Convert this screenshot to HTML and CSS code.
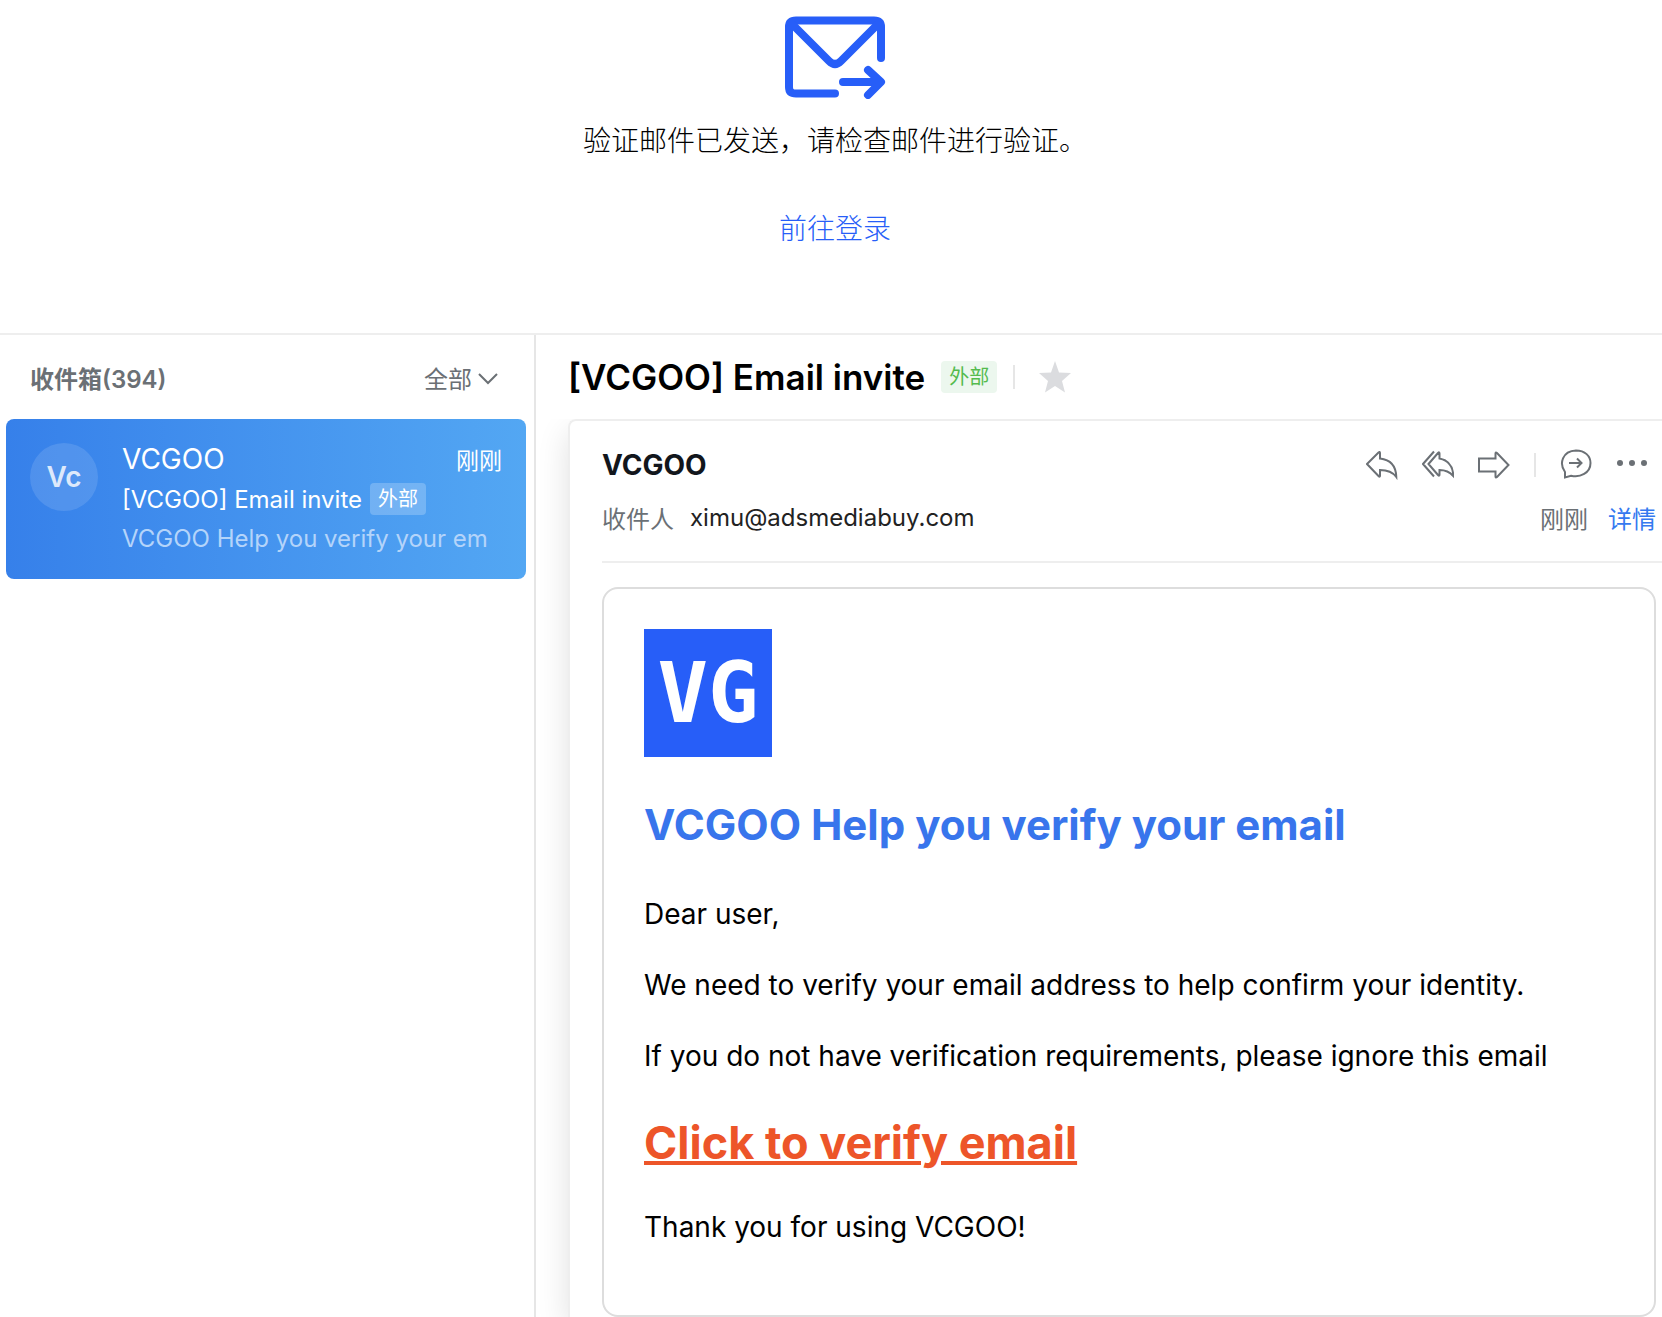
FILE: index.html
```html
<!DOCTYPE html>
<html lang="zh-CN">
    <head>
        <meta charset="UTF-8">
        <title>VCGOO</title>
        <link rel="stylesheet" href="styles.css">
    </head>
    <body>
        <header class="notice">
            <svg class="notice-icon" viewBox="0 0 101 83" fill="none" stroke="currentColor" stroke-width="8" stroke-linecap="round" stroke-linejoin="round">
                <path d="M96 42V11Q96 4.500 89 4.500H11Q4 4.500 4 11V71Q4 77.500 11 77.500H50" />
                <path d="M7 8L44 45Q50 51 56 45L93 8" />
                <path d="M58 66H94M83 54L96 66L83 79" />
            </svg>
            <p class="notice-text">验证邮件已发送，请检查邮件进行验证。</p>
            <a class="notice-link" href="#">前往登录</a>
        </header>

        <div class="mail">
            <aside class="sidebar">
                <div class="sidebar-head">
                    <h2 class="folder">收件箱(394)</h2>
                    <button class="filter" type="button">全部
                        <svg width="20" height="12" viewBox="0 0 20 12" fill="none" stroke="currentColor" stroke-width="2"><path d="M1 1L10 10L19 1" /></svg>
                    </button>
                </div>
                <a class="item" href="#">
                    <span class="avatar">Vc</span>
                    <span class="item-body">
                        <span class="item-row">
                            <span class="item-from">VCGOO</span>
                            <span class="item-time">刚刚</span>
                        </span>
                        <span class="item-subject">[VCGOO] Email invite <span class="tag tag-light">外部</span></span>
                        <span class="item-preview">VCGOO Help you verify your em</span>
                    </span>
                </a>
            </aside>

            <main class="reader">
                <div class="reader-head">
                    <h1 class="subject">[VCGOO] Email invite</h1>
                    <span class="tag tag-green">外部</span>
                    <span class="divider"></span>
                    <button class="icon-btn star" type="button" aria-label="星标">
                        <svg viewBox="0 0 32 32" fill="currentColor"><path d="M16 0L20 11.500L32 12L23 20L26 31.500L16 25L6 31.500L9 20L0 12L12 11.500Z" /></svg>
                    </button>
                </div>
                <div class="card-wrap">
                    <article class="card">
                        <div class="card-head">
                            <div class="row">
                                <strong class="sender">VCGOO</strong>
                                <div class="actions">
                                    <button class="icon-btn" type="button" aria-label="回复">
                                        <svg viewBox="0 0 32 32"><path d="M1 15L12.500 3.500Q14 2.300 14 4V9.500C23 10.500 30 16 30.300 28C26 22 20 21 14 21V26.500Q14 28.500 12.500 27Z" /></svg>
                                    </button>
                                    <button class="icon-btn" type="button" aria-label="回复全部">
                                        <svg viewBox="0 0 32 32"><path d="M12 2.500L1 15L12 27.500M6.500 15L16 4Q17.500 2.500 17.500 4.500V9.500C25 11 31 16 31.300 27C27 22 23 21 17.500 21V25.500Q17.500 27.500 16 26Z" /></svg>
                                    </button>
                                    <button class="icon-btn" type="button" aria-label="转发">
                                        <svg viewBox="0 0 32 32"><path d="M1 9.500H17.500V4.500Q17.500 2.800 19 4L30.500 16L19 28Q17.500 29.200 17.500 27.500V22.500H1Z" /></svg>
                                    </button>
                                    <span class="divider"></span>
                                    <button class="icon-btn" type="button" aria-label="分享到会话">
                                        <svg viewBox="0 0 32 32"><path d="M5 28.500V23C-1 15 2 2 16 1.500C25 1.500 30.500 7 30.500 14C30.500 24 20 29 11 26.700ZM9 14H21.500M17 9.500L21.500 14L17 18.500" /></svg>
                                    </button>
                                    <button class="icon-btn" type="button" aria-label="更多">
                                        <svg class="dots" viewBox="0 0 32 32"><circle cx="4" cy="14" r="3" /><circle cx="16" cy="14" r="3" /><circle cx="28" cy="14" r="3" /></svg>
                                    </button>
                                </div>
                            </div>
                            <div class="row meta">
                                <span class="to">收件人</span>
                                <span class="address">ximu@adsmediabuy.com</span>
                                <span class="time">刚刚</span>
                                <a class="detail" href="#">详情</a>
                            </div>
                        </div>
                        <section class="message">
                            <div class="logo">VG</div>
                            <h2 class="message-title">VCGOO Help you verify your email</h2>
                            <p>Dear user,</p>
                            <p>We need to verify your email address to help confirm your identity.</p>
                            <p>If you do not have verification requirements, please ignore this email</p>
                            <a class="verify" href="#">Click to verify email</a>
                            <p>Thank you for using VCGOO!</p>
                        </section>
                    </article>
                </div>
            </main>
        </div>
    </body>
</html>
```
FILE: styles.css
```css
* {
    box-sizing: border-box;
}
html, body {
    margin: 0px;
    background: #fff;
    color: #000;
    font-family: Inter, "Noto Sans CJK SC", sans-serif;
    font-size: 24px;
}
h1, h2, p {
    margin: 0px;
}
a {
    color: inherit;
    text-decoration: none;
}
button {
    padding: 0px;
    border: none;
    background: none;
    color: inherit;
    font: inherit;
}

/* top notice */
.notice {
    display: flex;
    flex-direction: column;
    align-items: center;
    padding: 16px 0px 86px 8px;
    border-bottom: 2px solid #eee;
    font-family: "Noto Sans CJK SC", sans-serif;
    font-size: 28px;
    font-weight: 300;
    line-height: 40px;
}
.notice-icon {
    width: 101px;
    height: 83px;
    color: #275ef8;
}
.notice-text {
    margin: 20px 0px 48px;
}
.notice-link {
    color: #275ef8;
}

/* mail client */
.mail {
    display: flex;
}
.sidebar {
    flex: 0 0 536px;
    padding: 0px 8px 0px 6px;
    border-right: 2px solid #e6e6e6;
}
.sidebar-head {
    display: flex;
    align-items: center;
    justify-content: space-between;
    height: 84px;
    padding: 0px 28px 0px 24px;
    color: #6b7075;
}
.folder {
    font-size: 24px;
    font-weight: 600;
}
.filter {
    display: flex;
    align-items: center;
    gap: 6px;
}
.filter svg {
    margin-top: 4px;
}
.item {
    display: flex;
    gap: 24px;
    height: 160px;
    padding: 24px;
    border-radius: 8px;
    background: linear-gradient(90deg, #3680ea, #53a7f3);
    color: #fff;
}
.avatar {
    flex: none;
    width: 68px;
    height: 68px;
    border-radius: 50%;
    background: rgba(255, 255, 255, 0.12);
    color: #dde9fb;
    font-size: 28px;
    font-weight: 600;
    line-height: 68px;
    text-align: center;
}
.item-body {
    flex: 1;
    min-width: 0px;
    white-space: nowrap;
}
.item-row {
    display: flex;
    align-items: center;
    justify-content: space-between;
    height: 32px;
    font-size: 28px;
}
.item-time {
    font-size: 23px;
}
.item-subject {
    display: flex;
    align-items: center;
    gap: 8px;
    height: 48px;
}
.item-preview {
    display: block;
    line-height: 32px;
    color: #b4d4fa;
}
.tag {
    height: 32px;
    padding: 0px 8px;
    border-radius: 4px;
    font-size: 20px;
    line-height: 32px;
}
.tag-light {
    background: rgba(255, 255, 255, 0.22);
}
.tag-green {
    background: #ecf7ee;
    color: #54bb4e;
}

.reader {
    flex: 1;
    min-width: 0px;
}
.reader-head {
    display: flex;
    align-items: center;
    gap: 16px;
    height: 84px;
    padding-left: 32px;
}
.subject {
    font-size: 35px;
    font-weight: 600;
}
.divider {
    width: 2px;
    height: 24px;
    background: #e6e6e6;
}
.icon-btn {
    display: block;
    width: 32px;
    height: 32px;
}
.icon-btn svg {
    display: block;
    width: 32px;
    height: 32px;
}
.star {
    margin-left: 8px;
    color: #dbdcdf;
}
.card-wrap {
    overflow: hidden;
    padding-left: 32px;
}
.card {
    padding: 0px 6px 0px 32px;
    border: 2px solid #eee;
    border-width: 2px 0px 0px 2px;
    border-radius: 8px 0px 0px 0px;
    box-shadow: 0px 12px 32px rgba(0, 0, 0, 0.12);
}
.card-head {
    height: 142px;
    margin-right: -6px;
    padding: 28px 6px 0px 0px;
    border-bottom: 2px solid #eee;
}
.row {
    display: flex;
    align-items: center;
    height: 32px;
}
.sender {
    color: #12161c;
    font-size: 28px;
    font-weight: 700;
}
.actions {
    display: flex;
    align-items: center;
    gap: 24px;
    margin-left: auto;
    padding-right: 8px;
    color: #6b7075;
}
.actions svg {
    fill: none;
    stroke: currentColor;
    stroke-width: 2;
}
.actions .dots {
    fill: currentColor;
    stroke: none;
}
.meta {
    margin-top: 20px;
}
.to, .time {
    color: #6b7075;
}
.address {
    margin-left: 16px;
    color: #222;
}
.time {
    margin-left: auto;
}
.detail {
    margin-left: 20px;
    color: #3579f0;
}

.message {
    margin-top: 24px;
    padding: 40px 40px 38px;
    border: 2px solid #ddd;
    border-radius: 16px;
    font-size: 28px;
    line-height: 43px;
}
.message p {
    margin-bottom: 28px;
}
.logo {
    width: 128px;
    height: 128px;
    background: #275ef8;
    color: #fff;
    font-family: "DejaVu Sans Mono", monospace;
    font-size: 84px;
    font-weight: bold;
    line-height: 128px;
    text-align: center;
}
.message-title {
    margin: 36px 0px;
    color: #3875ec;
    font-size: 42px;
    font-weight: 700;
    line-height: 64px;
}
.verify {
    display: block;
    margin: 36px 0px 34px;
    color: #ed5529;
    font-size: 45px;
    font-weight: 700;
    line-height: 58px;
    text-decoration: underline;
    text-decoration-thickness: 4px;
}
```
